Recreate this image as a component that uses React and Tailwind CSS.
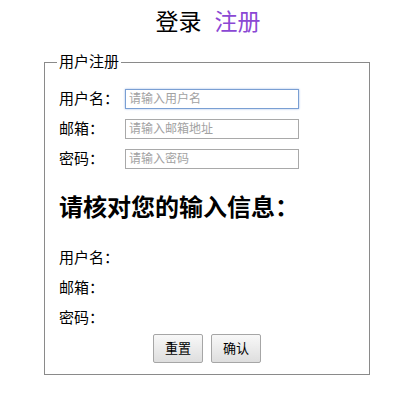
export default function App() {
  const font = { fontFamily: '"Liberation Sans", "Noto Sans CJK SC", sans-serif' }
  const fields = [
    { label: '用户名：', ph: '请输入用户名', focus: true },
    { label: '邮箱：', ph: '请输入邮箱地址' },
    { label: '密码：', ph: '请输入密码' },
  ]
  return (
    <div className="w-[416px] h-[415px] bg-white text-black" style={font}>
      <div className="pt-[6px] h-[39px] text-center text-[23px] leading-[33px]">
        <span>登录</span>
        <span className="ml-[13px] text-[#8b48d4]">注册</span>
      </div>

      <fieldset className="ml-[44px] mt-[14px] w-[326px] border border-[#8a8a8a] px-0 pb-[11px]">
        <legend className="ml-[12px] px-[2px] text-[15px] leading-[18px]">用户注册</legend>

        <div className="pl-[14px] mt-[13px]">
          {fields.map(f => (
            <div key={f.label} className="flex items-center h-[30px]">
              <span className="w-[66px] text-[15px] leading-[20px]">{f.label}</span>
              <input
                placeholder={f.ph}
                className={`w-[174px] h-[20px] px-[3px] text-[12px] bg-white placeholder:text-[#a2a2a2] outline-none border ${
                  f.focus ? 'border-[#7a9fd3] shadow-[0_0_2px_#9fbbe6]' : 'border-[#a9a9a9]'
                }`}
              />
            </div>
          ))}

          <h2 className="mt-[18px] h-[32px] text-[24px] leading-[32px] font-bold">请核对您的输入信息：</h2>

          <div className="mt-[19px]">
            <div className="h-[30px] leading-[30px] text-[15px]">用户名：</div>
            <div className="h-[30px] leading-[30px] text-[15px]">邮箱：</div>
            <div className="h-[30px] leading-[30px] text-[15px]">密码：</div>
          </div>
        </div>

        <div className="mt-[1px] flex justify-center gap-[8px]">
          <button className="w-[50px] h-[29px] text-[13px] border border-[#a6a6a6] rounded-[2px] bg-gradient-to-b from-[#f8f8f8] to-[#dedede]">重置</button>
          <button className="w-[50px] h-[29px] text-[13px] border border-[#a6a6a6] rounded-[2px] bg-gradient-to-b from-[#f8f8f8] to-[#dedede]">确认</button>
        </div>
      </fieldset>
    </div>
  )
}
